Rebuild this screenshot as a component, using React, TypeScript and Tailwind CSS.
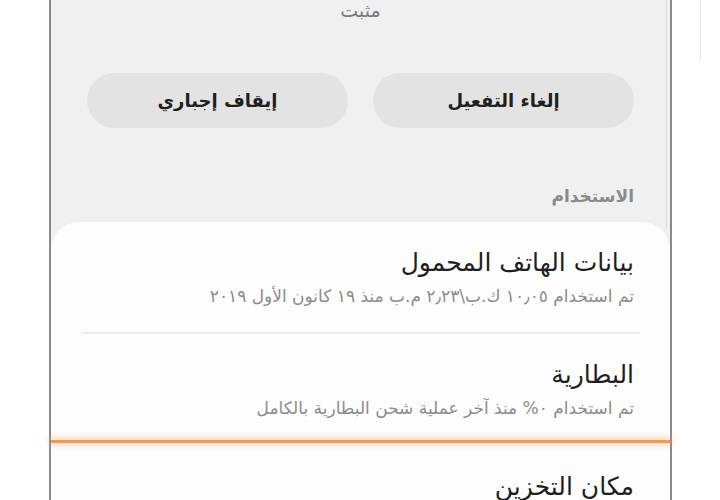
import React from 'react';

const font = { fontFamily: '"DejaVu Sans", "Noto Sans", sans-serif' };

const UsageItem = ({ title, detail }: { title: string; detail: string }) => (
  <div className="px-[36px]">
    <div className="text-[25px] leading-[30px] text-[#1f1f1f]">{title}</div>
    <div className="mt-[7px] text-[17px] leading-[22px] text-[#8c8c8c]">{detail}</div>
  </div>
);

const App = () => {
  return (
    <div className="w-[720px] h-[500px] bg-white overflow-hidden relative" style={font}>
      {/* faint scrollbar outside the frame */}
      <div className="absolute left-[700px] top-0 h-[60px] w-px bg-[#e4e4e4]" />

      <div className="ml-[49px] w-[623px] h-full border-x-2 border-[#8a8a8a] bg-[#f0f0f0] relative">
        <div className="absolute right-[3px] top-0 h-[228px] w-px bg-[#dcdcdc]" />
        <div dir="rtl" className="flex flex-col h-full">
          <div className="text-center text-[19px] leading-[20px] text-[#7a7a7a]">مثبت</div>

          {/* action buttons */}
          <div className="mt-[53px] flex gap-[25px] px-[36px]">
            <button className="h-[55px] flex-1 rounded-full bg-[#e3e3e3] text-[18px] font-bold text-[#1f1f1f]">
              إلغاء التفعيل
            </button>
            <button className="h-[55px] flex-1 rounded-full bg-[#e3e3e3] text-[18px] font-bold text-[#1f1f1f]">
              إيقاف إجباري
            </button>
          </div>

          {/* usage section */}
          <div className="mt-[58px] px-[36px] text-[17px] font-bold leading-[20px] text-[#8a8a8a]">الاستخدام</div>

          <div className="mt-[16px] flex-1 rounded-t-[28px] bg-[#fdfdfd]">
            <div className="pt-[26px]">
              <UsageItem
                title="بيانات الهاتف المحمول"
                detail="تم استخدام ١٠٫٠٥ ك.ب\٢٫٢٣ م.ب منذ ١٩ كانون الأول ٢٠١٩"
              />
            </div>
            <div className="mx-[30px] mt-[25px] h-[2px] bg-[#ececec]" />
            <div className="pt-[26px]">
              <UsageItem
                title="البطارية"
                detail="تم استخدام ٠% منذ آخر عملية شحن البطارية بالكامل"
              />
            </div>
            <div className="mt-[21px] h-[3px] bg-[#ee9a58] shadow-[0_0_6px_2px_rgba(245,160,90,0.45)]" />
            <div className="px-[36px] pt-[29px]">
              <div className="text-[25px] leading-[30px] text-[#1f1f1f]">مكان التخزين</div>
            </div>
          </div>
        </div>
      </div>
    </div>
  );
};

export default App;
